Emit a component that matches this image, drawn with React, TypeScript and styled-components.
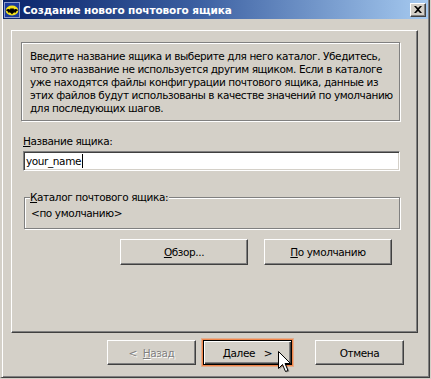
import React from 'react';
import styled, { createGlobalStyle } from 'styled-components';

const GlobalStyle = createGlobalStyle`
  html, body {
    margin: 0;
    padding: 0;
    background: #d4d0c8;
  }
  body {
    font-family: 'DejaVu Sans', 'Liberation Sans', sans-serif;
    font-size: 10.5px;
    color: #000;
  }
`;

// window chrome
const Window = styled.div`
  position: relative;
  width: 430px;
  height: 378px;
  box-sizing: border-box;
  display: flex;
  flex-direction: column;
  background: #d4d0c8;
  border-style: solid;
  border-width: 0 1px 1px 2px;
  border-color: #d4d0c8 #404040 #404040 #d4d0c8;
  box-shadow: inset 1px 0 #fff, inset -1px -1px #808080;
  padding: 0 1px 1px 1px;
`;

const TitleBar = styled.div`
  height: 19px;
  flex: none;
  display: flex;
  align-items: center;
  padding: 0 2px 0 1px;
  background: linear-gradient(to right, #0a246a 0%, #3a5ea0 45%, #a6caf0 100%);
`;

const TitleText = styled.span`
  flex: 1;
  margin-left: 3px;
  color: #fff;
  font-weight: bold;
  font-size: 10.5px;
  letter-spacing: -0.1px;
  white-space: nowrap;
`;

const CloseButton = styled.div`
  width: 16px;
  height: 14px;
  box-sizing: border-box;
  display: flex;
  align-items: center;
  justify-content: center;
  background: #d4d0c8;
  border: 1px solid;
  border-color: #fff #404040 #404040 #fff;
  box-shadow: inset -1px -1px #808080;
`;

const Body = styled.div`
  flex: 1;
  display: flex;
  flex-direction: column;
  padding: 11px 10px 0 8px;
`;

// wizard page
const Panel = styled.div`
  flex: 1;
  display: flex;
  flex-direction: column;
  padding: 11px 17px 0 9px;
  border-style: solid;
  border-width: 1px;
  border-color: #fff #404040 #404040 #fff;
  box-shadow: inset -1px -1px #808080;
`;

const InfoBox = styled.div`
  padding: 7px 8px 5px;
  border: 1px solid #808080;
  box-shadow: inset 1px 1px #fff, 1px 1px #fff;
`;

const TextLine = styled.div`
  height: 13px;
  line-height: 13px;
  white-space: nowrap;
  letter-spacing: -0.4px;
`;

const FieldLabel = styled(TextLine)`
  margin: 14px 0 0 2px;
`;

const Edit = styled.div`
  margin: 3px 0 0 2px;
  height: 20px;
  box-sizing: border-box;
  display: flex;
  align-items: center;
  padding-left: 2px;
  background: #fff;
  border: 1px solid;
  border-color: #808080 #fff #fff #808080;
  box-shadow: inset 1px 1px #404040, inset -1px -1px #d4d0c8;
  letter-spacing: -0.4px;
`;

const Caret = styled.span`
  width: 1px;
  height: 14px;
  margin-left: 1px;
  background: #000;
`;

const Group = styled.fieldset`
  margin: 20px 0 0 3px;
  padding: 0 0 8px 5px;
  min-width: 0;
  border: 1px solid #808080;
  box-shadow: inset 1px 1px #fff, 1px 1px #fff;
`;

const GroupLegend = styled.legend`
  padding: 0 1px 0 0;
  line-height: 13px;
  background: #d4d0c8;
  letter-spacing: -0.4px;
`;

const GroupValue = styled(TextLine)`
  margin: 3px 0 0 1px;
`;

const ButtonRow = styled.div<{ $pad: number }>`
  display: flex;
  justify-content: flex-end;
  padding-right: ${(p) => p.$pad}px;
`;

const Button = styled.div<{ $w: number; $h: number }>`
  width: ${(p) => p.$w}px;
  height: ${(p) => p.$h}px;
  box-sizing: border-box;
  display: flex;
  align-items: center;
  justify-content: center;
  white-space: pre;
  letter-spacing: -0.4px;
  border: 1px solid;
  border-color: #fff #404040 #404040 #fff;
  box-shadow: inset -1px -1px #808080;
`;

const DisabledButton = styled(Button)`
  color: #808080;
  text-shadow: 1px 1px #fff;
`;

const DefaultButton = styled(Button)`
  border-color: #000;
  box-shadow: inset 1px 1px #fff, inset -1px -1px #404040, inset -2px -2px #808080,
    0 0 0 1px #f2864a, 0 0 0 2px rgba(242, 134, 74, 0.45);
`;

const CancelButton = styled(Button)`
  margin-left: 16px;
`;

const BrowseRow = styled(ButtonRow)`
  margin-top: 10px;
  gap: 16px;
`;

const WizardRow = styled(ButtonRow)`
  flex: none;
  margin: 7px 0 11px;
  gap: 7px;
`;

const Pointer = styled.svg`
  position: absolute;
  left: 275px;
  top: 350px;
`;

const BatIcon = () => (
  <svg width="16" height="16" viewBox="0 0 16 16">
    <rect x="0" y="0" width="16" height="16" fill="#1a3a9c" />
    <rect x="0.5" y="0.5" width="15" height="15" fill="none" stroke="#fff" strokeDasharray="1 1" />
    <ellipse cx="8" cy="8.5" rx="6.3" ry="5" fill="#f4e21a" />
    <path
      d="M1.8 8.2 C3.5 6.8 5 6.8 6 7.6 L7 5.8 L7.6 6.8 L8.4 6.8 L9 5.8 L10 7.6 C11 6.8 12.5 6.8 14.2 8.2 C12.8 8.6 12 9.6 11.6 11 C10.6 10.2 9.6 10.4 8 12.4 C6.4 10.4 5.4 10.2 4.4 11 C4 9.6 3.2 8.6 1.8 8.2 Z"
      fill="#000"
    />
  </svg>
);

const CloseGlyph = () => (
  <svg width="8" height="7" viewBox="0 0 8 7">
    <path d="M0 0 H2 L4 2 L6 0 H8 L5 3.5 L8 7 H6 L4 5 L2 7 H0 L3 3.5 Z" fill="#000" />
  </svg>
);

const infoLines = [
  'Введите название ящика и выберите для него каталог. Убедитесь,',
  'что это название не используется другим ящиком. Если в каталоге',
  'уже находятся файлы конфигурации почтового ящика, данные из',
  'этих файлов будут использованы в качестве значений по умолчанию',
  'для последующих шагов.'
];

const App: React.FC = () => {
  return (
    <>
      <GlobalStyle />
      <Window>
        <TitleBar>
          <BatIcon />
          <TitleText>Создание нового почтового ящика</TitleText>
          <CloseButton>
            <CloseGlyph />
          </CloseButton>
        </TitleBar>

        <Body>
          <Panel>
            <InfoBox>
              {infoLines.map((line, i) => (
                <TextLine key={i}>{line}</TextLine>
              ))}
            </InfoBox>

            <FieldLabel>
              <u>Н</u>азвание ящика:
            </FieldLabel>
            <Edit>
              your_name
              <Caret />
            </Edit>

            <Group>
              <GroupLegend>
                <u>К</u>аталог почтового ящика:
              </GroupLegend>
              <GroupValue>&lt;по умолчанию&gt;</GroupValue>
            </Group>

            <BrowseRow $pad={8}>
              <Button $w={128} $h={26}>
                <span>
                  <u>О</u>бзор...
                </span>
              </Button>
              <Button $w={128} $h={26}>
                <span>
                  <u>П</u>о умолчанию
                </span>
              </Button>
            </BrowseRow>
          </Panel>

          {/* wizard navigation */}
          <WizardRow $pad={14}>
            <DisabledButton $w={89} $h={25}>
              <span>
                {'<  '}
                <u>Н</u>азад
              </span>
            </DisabledButton>
            <DefaultButton $w={89} $h={25}>
              <span>
                <u>Д</u>алее{'   >'}
              </span>
            </DefaultButton>
            <CancelButton $w={89} $h={25}>
              Отмена
            </CancelButton>
          </WizardRow>
        </Body>

        <Pointer width="16" height="24" viewBox="0 0 16 24">
          <path d="M2.5 2.5 V19.5 L6.5 15.5 L9.5 22.5 L12.5 21.5 L9.5 14.5 H14.5 Z" fill="rgba(0,0,0,0.3)" />
          <path d="M1.5 1.5 V18.5 L5.5 14.5 L8.5 21.5 L11 20.5 L8 13.5 H13.5 Z" fill="#fff" stroke="#000" strokeWidth="1" />
        </Pointer>
      </Window>
    </>
  );
};

export default App;
